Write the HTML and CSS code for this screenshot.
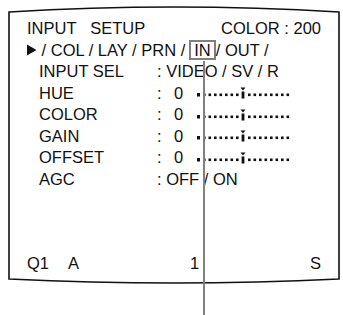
FILE: index.html
```html
<!DOCTYPE html>
<html>
<head>
<meta charset="utf-8">
<link rel="stylesheet" href="styles.css">
</head>
<body>
<div class="screen">
  <svg class="frame" width="343" height="315" viewBox="0 0 343 315">
    <path d="M9,12 Q174,2 339,12 L339,279 Q174,287 9,279 Z" fill="none" stroke="#111" stroke-width="1.6"/>
  </svg>
  <div class="menu">
    <div class="row head"><span>INPUT&nbsp;&nbsp; SETUP</span><span>COLOR : 200</span></div>
    <div class="row tabs"><svg class="arrow" width="10" height="12" viewBox="0 0 10 12"><path d="M0,0.5 L9.5,6 L0,11.5 Z" fill="#111"/></svg>&nbsp;/ COL / LAY / PRN /<span class="sel">IN</span>/ OUT /</div>
    <div class="row item"><span class="label">INPUT SEL</span><span class="val">: VIDEO / SV / R</span></div>
    <div class="row item"><span class="label">HUE</span><span class="colon">:</span><span class="num">0</span>
      <svg class="scale" width="94" height="18" viewBox="0 0 94 18"><g fill="#111"><rect x="0" y="9" width="3" height="3.5"/><rect x="6" y="9.5" width="2.6" height="2.6"/><rect x="11.5" y="9.5" width="2.6" height="2.6"/><rect x="17" y="9.5" width="2.6" height="2.6"/><rect x="22.5" y="9.5" width="2.6" height="2.6"/><rect x="28" y="9.5" width="2.6" height="2.6"/><rect x="33.5" y="9.5" width="2.6" height="2.6"/><rect x="39" y="9.5" width="2.6" height="2.6"/><path d="M43.5,3.5 L48.5,3.5 L46,6.5 Z"/><rect x="44.6" y="7.5" width="2.8" height="7"/><rect x="51" y="9.5" width="2.6" height="2.6"/><rect x="56.5" y="9.5" width="2.6" height="2.6"/><rect x="62" y="9.5" width="2.6" height="2.6"/><rect x="67.5" y="9.5" width="2.6" height="2.6"/><rect x="73" y="9.5" width="2.6" height="2.6"/><rect x="78.5" y="9.5" width="2.6" height="2.6"/><rect x="84" y="9.5" width="2.6" height="2.6"/><rect x="89.5" y="9.5" width="2.6" height="2.6"/></g></svg>
    </div>
    <div class="row item"><span class="label">COLOR</span><span class="colon">:</span><span class="num">0</span>
      <svg class="scale" width="94" height="18" viewBox="0 0 94 18"><g fill="#111"><rect x="0" y="9" width="3" height="3.5"/><rect x="6" y="9.5" width="2.6" height="2.6"/><rect x="11.5" y="9.5" width="2.6" height="2.6"/><rect x="17" y="9.5" width="2.6" height="2.6"/><rect x="22.5" y="9.5" width="2.6" height="2.6"/><rect x="28" y="9.5" width="2.6" height="2.6"/><rect x="33.5" y="9.5" width="2.6" height="2.6"/><rect x="39" y="9.5" width="2.6" height="2.6"/><path d="M43.5,3.5 L48.5,3.5 L46,6.5 Z"/><rect x="44.6" y="7.5" width="2.8" height="7"/><rect x="51" y="9.5" width="2.6" height="2.6"/><rect x="56.5" y="9.5" width="2.6" height="2.6"/><rect x="62" y="9.5" width="2.6" height="2.6"/><rect x="67.5" y="9.5" width="2.6" height="2.6"/><rect x="73" y="9.5" width="2.6" height="2.6"/><rect x="78.5" y="9.5" width="2.6" height="2.6"/><rect x="84" y="9.5" width="2.6" height="2.6"/><rect x="89.5" y="9.5" width="2.6" height="2.6"/></g></svg>
    </div>
    <div class="row item"><span class="label">GAIN</span><span class="colon">:</span><span class="num">0</span>
      <svg class="scale" width="94" height="18" viewBox="0 0 94 18"><g fill="#111"><rect x="0" y="9" width="3" height="3.5"/><rect x="6" y="9.5" width="2.6" height="2.6"/><rect x="11.5" y="9.5" width="2.6" height="2.6"/><rect x="17" y="9.5" width="2.6" height="2.6"/><rect x="22.5" y="9.5" width="2.6" height="2.6"/><rect x="28" y="9.5" width="2.6" height="2.6"/><rect x="33.5" y="9.5" width="2.6" height="2.6"/><rect x="39" y="9.5" width="2.6" height="2.6"/><path d="M43.5,3.5 L48.5,3.5 L46,6.5 Z"/><rect x="44.6" y="7.5" width="2.8" height="7"/><rect x="51" y="9.5" width="2.6" height="2.6"/><rect x="56.5" y="9.5" width="2.6" height="2.6"/><rect x="62" y="9.5" width="2.6" height="2.6"/><rect x="67.5" y="9.5" width="2.6" height="2.6"/><rect x="73" y="9.5" width="2.6" height="2.6"/><rect x="78.5" y="9.5" width="2.6" height="2.6"/><rect x="84" y="9.5" width="2.6" height="2.6"/><rect x="89.5" y="9.5" width="2.6" height="2.6"/></g></svg>
    </div>
    <div class="row item"><span class="label">OFFSET</span><span class="colon">:</span><span class="num">0</span>
      <svg class="scale" width="94" height="18" viewBox="0 0 94 18"><g fill="#111"><rect x="0" y="9" width="3" height="3.5"/><rect x="6" y="9.5" width="2.6" height="2.6"/><rect x="11.5" y="9.5" width="2.6" height="2.6"/><rect x="17" y="9.5" width="2.6" height="2.6"/><rect x="22.5" y="9.5" width="2.6" height="2.6"/><rect x="28" y="9.5" width="2.6" height="2.6"/><rect x="33.5" y="9.5" width="2.6" height="2.6"/><rect x="39" y="9.5" width="2.6" height="2.6"/><path d="M43.5,3.5 L48.5,3.5 L46,6.5 Z"/><rect x="44.6" y="7.5" width="2.8" height="7"/><rect x="51" y="9.5" width="2.6" height="2.6"/><rect x="56.5" y="9.5" width="2.6" height="2.6"/><rect x="62" y="9.5" width="2.6" height="2.6"/><rect x="67.5" y="9.5" width="2.6" height="2.6"/><rect x="73" y="9.5" width="2.6" height="2.6"/><rect x="78.5" y="9.5" width="2.6" height="2.6"/><rect x="84" y="9.5" width="2.6" height="2.6"/><rect x="89.5" y="9.5" width="2.6" height="2.6"/></g></svg>
    </div>
    <div class="row item"><span class="label">AGC</span><span class="val">: OFF / ON</span></div>
  </div>
  <div class="row status">
    <span class="q">Q1</span><span class="a">A</span><span class="one">1</span><span class="s">S</span>
  </div>
  <div class="leader"></div>
</div>
</body>
</html>
```

FILE: styles.css
```css
html, body {
  margin: 0;
  padding: 0;
  background: #fff;
}
.screen {
  position: relative;
  width: 343px;
  height: 315px;
  box-sizing: border-box;
  padding: 18px 22px 0 27px;
  font-family: "Liberation Sans", Arial, sans-serif;
  font-size: 16.5px;
  color: #111;
  overflow: hidden;
}
.frame {
  position: absolute;
  left: 0;
  top: 0;
  z-index: 0;
}
.menu {
  position: relative;
  display: flex;
  flex-direction: column;
}
.row {
  display: flex;
  align-items: center;
  height: 21.5px;
  line-height: 21.5px;
  white-space: nowrap;
}
.head {
  justify-content: space-between;
}
.arrow {
  display: block;
}
.sel {
  display: inline-block;
  box-sizing: border-box;
  height: 20px;
  line-height: 17px;
  padding: 0 3px;
  margin: 0 0 0 4px;
  border: 2px solid #808080;
}
.item {
  padding-left: 12px;
}
.label {
  width: 118px;
}
.colon {
  width: 17px;
}
.num {
  width: 23px;
}
.scale {
  display: block;
}
.status {
  position: relative;
  margin-top: 63px;
}
.q {
  width: 41px;
}
.a {
  width: 122px;
}
.one {
  flex: 1;
}
.leader {
  position: absolute;
  left: 203px;
  top: 61px;
  bottom: 0;
  width: 2px;
  background: #808080;
}
```
